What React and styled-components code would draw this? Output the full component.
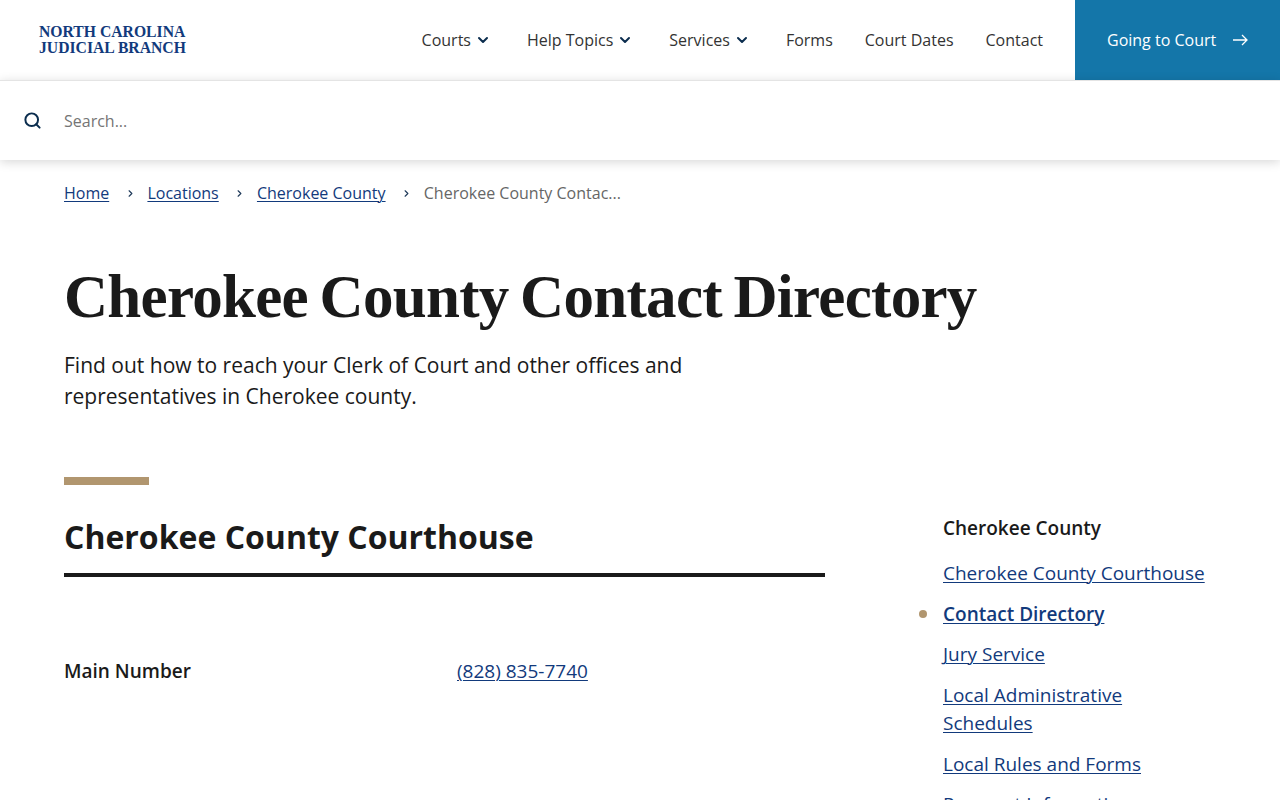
import React from 'react';
import styled, { createGlobalStyle } from 'styled-components';
import { ChevronDown, ChevronRight, Search } from 'lucide-react';

const GlobalStyle = createGlobalStyle`
  html, body {
    margin: 0;
    padding: 0;
    background: #fff;
    font-family: "Open Sans", "Liberation Sans", sans-serif;
    color: #1a1a1a;
  }
  * { box-sizing: border-box; }
`;

const Page = styled.div`
  width: 1280px;
  height: 800px;
  overflow: hidden;
`;

const Header = styled.header`
  display: flex;
  align-items: stretch;
  justify-content: space-between;
  height: 80px;
  padding-left: 39px;
`;

const Logo = styled.a`
  display: flex;
  flex-direction: column;
  justify-content: center;
  font-family: "Liberation Serif", serif;
  font-weight: 700;
  font-size: 15.7px;
  line-height: 16px;
  color: #123a7c;
  text-transform: uppercase;
  padding-bottom: 1px;
`;

const NavArea = styled.div`
  display: flex;
  align-items: stretch;
`;

const Nav = styled.nav`
  display: flex;
  align-items: center;
  gap: 32px;
  padding-right: 32px;
`;

const NavItem = styled.a`
  display: flex;
  align-items: center;
  gap: 4px;
  font-size: 16px;
  color: #333;
  svg { color: #0b2d4e; margin-right: ${(p) => (p.$menu ? '4px' : 0)}; }
`;

const CtaButton = styled.a`
  display: flex;
  align-items: center;
  gap: 16px;
  width: 205px;
  padding-left: 32px;
  background: #1476a9;
  color: #fff;
  font-size: 16px;
`;

const SearchBar = styled.div`
  position: relative;
  display: flex;
  align-items: center;
  gap: 22px;
  height: 80px;
  padding-left: 23px;
  border-top: 1px solid #e4e4e4;
  box-shadow: 0 2px 10px rgba(0, 0, 0, 0.16);
  svg { color: #0b2d4e; }
`;

const SearchHint = styled.span`
  font-size: 16px;
  color: #757575;
`;

const Main = styled.main`
  padding: 0 64px;
`;

const Crumbs = styled.div`
  display: flex;
  align-items: center;
  height: 24px;
  margin-top: 21px;
  font-size: 16px;
  svg { color: #1f3a5a; margin: 0 11.6px 0 15.6px; }
`;

const TextLink = styled.a`
  color: #123a7c;
  text-decoration: underline;
  text-underline-offset: 2px;
  text-decoration-thickness: 1px;
`;

const CrumbCurrent = styled.span`
  color: #666;
`;

const Title = styled.h1`
  margin: 56px 0 0;
  font-family: "Liberation Serif", serif;
  font-weight: 700;
  font-size: 61px;
  line-height: 72px;
  letter-spacing: -0.7px;
  word-spacing: -3px;
  color: #1a1a1a;
`;

const Lead = styled.p`
  margin: 17px 0 0;
  width: 700px;
  font-size: 21px;
  line-height: 31px;
  color: #1a1a1a;
`;

const Columns = styled.div`
  display: flex;
  justify-content: space-between;
  margin-top: 65px;
`;

const Content = styled.section`
  width: 761px;
`;

const Accent = styled.div`
  width: 85px;
  height: 8px;
  background: #b1966f;
`;

const SectionTitle = styled.h2`
  margin: 0;
  padding: 28px 0 12px;
  border-bottom: 4px solid #1a1a1a;
  font-size: 32px;
  line-height: 48px;
  font-weight: 700;
`;

const ContactRow = styled.div`
  display: grid;
  grid-template-columns: 393px 1fr;
  margin-top: 80px;
  font-size: 19px;
  line-height: 28px;
`;

const ContactLabel = styled.span`
  font-weight: 600;
`;

const Side = styled.aside`
  width: 273px;
  padding-right: 8px;
  margin-top: 37px;
`;

const SideTitle = styled.div`
  font-size: 19px;
  font-weight: 600;
  line-height: 28px;
  margin-bottom: 17px;
`;

const SideList = styled.ul`
  list-style: none;
  margin: 0;
  padding: 0;
  display: flex;
  flex-direction: column;
  gap: 12.7px;
`;

const SideItem = styled.li`
  position: relative;
  font-size: 19px;
  line-height: 28px;
  font-weight: ${(p) => (p.$active ? 600 : 400)};
  &::before {
    content: '';
    display: ${(p) => (p.$active ? 'block' : 'none')};
    position: absolute;
    left: -24px;
    top: 10px;
    width: 8px;
    height: 8px;
    border-radius: 50%;
    background: #b1966f;
  }
`;

const navItems = [
  { label: 'Courts', menu: true },
  { label: 'Help Topics', menu: true },
  { label: 'Services', menu: true },
  { label: 'Forms' },
  { label: 'Court Dates' },
  { label: 'Contact' },
];

const sideLinks = [
  'Cherokee County Courthouse',
  'Contact Directory',
  'Jury Service',
  'Local Administrative Schedules',
  'Local Rules and Forms',
  'Payment Information',
];

const App = () => {
  return (
    <Page>
      <GlobalStyle />
      <Header>
        <Logo>
          <span>North Carolina</span>
          <span>Judicial Branch</span>
        </Logo>
        <NavArea>
          <Nav>
            {navItems.map((item) => (
              <NavItem key={item.label} $menu={item.menu}>
                {item.label}
                {item.menu && <ChevronDown size={16} strokeWidth={3} />}
              </NavItem>
            ))}
          </Nav>
          <CtaButton>
            Going to Court
            <svg width="16" height="12" viewBox="0 0 16 12" fill="none" stroke="currentColor" strokeWidth="1.3">
              <path d="M1 6h14M10 1l5 5-5 5" />
            </svg>
          </CtaButton>
        </NavArea>
      </Header>
      <SearchBar>
        <Search size={19} strokeWidth={2.5} />
        <SearchHint>Search...</SearchHint>
      </SearchBar>
      <Main>
        <Crumbs>
          <TextLink>Home</TextLink>
          <ChevronRight size={11} strokeWidth={2.5} />
          <TextLink>Locations</TextLink>
          <ChevronRight size={11} strokeWidth={2.5} />
          <TextLink>Cherokee County</TextLink>
          <ChevronRight size={11} strokeWidth={2.5} />
          <CrumbCurrent>Cherokee County Contac...</CrumbCurrent>
        </Crumbs>
        <Title>Cherokee County Contact Directory</Title>
        <Lead>
          Find out how to reach your Clerk of Court and other offices and representatives in
          Cherokee county.
        </Lead>
        <Columns>
          <Content>
            <Accent />
            <SectionTitle>Cherokee County Courthouse</SectionTitle>
            <ContactRow>
              <ContactLabel>Main Number</ContactLabel>
              <div>
                <TextLink>(828) 835-7740</TextLink>
              </div>
            </ContactRow>
          </Content>
          <Side>
            <SideTitle>Cherokee County</SideTitle>
            <SideList>
              {sideLinks.map((label, index) => (
                <SideItem key={label} $active={index === 1}>
                  <TextLink>{label}</TextLink>
                </SideItem>
              ))}
            </SideList>
          </Side>
        </Columns>
      </Main>
    </Page>
  );
};

export default App;
